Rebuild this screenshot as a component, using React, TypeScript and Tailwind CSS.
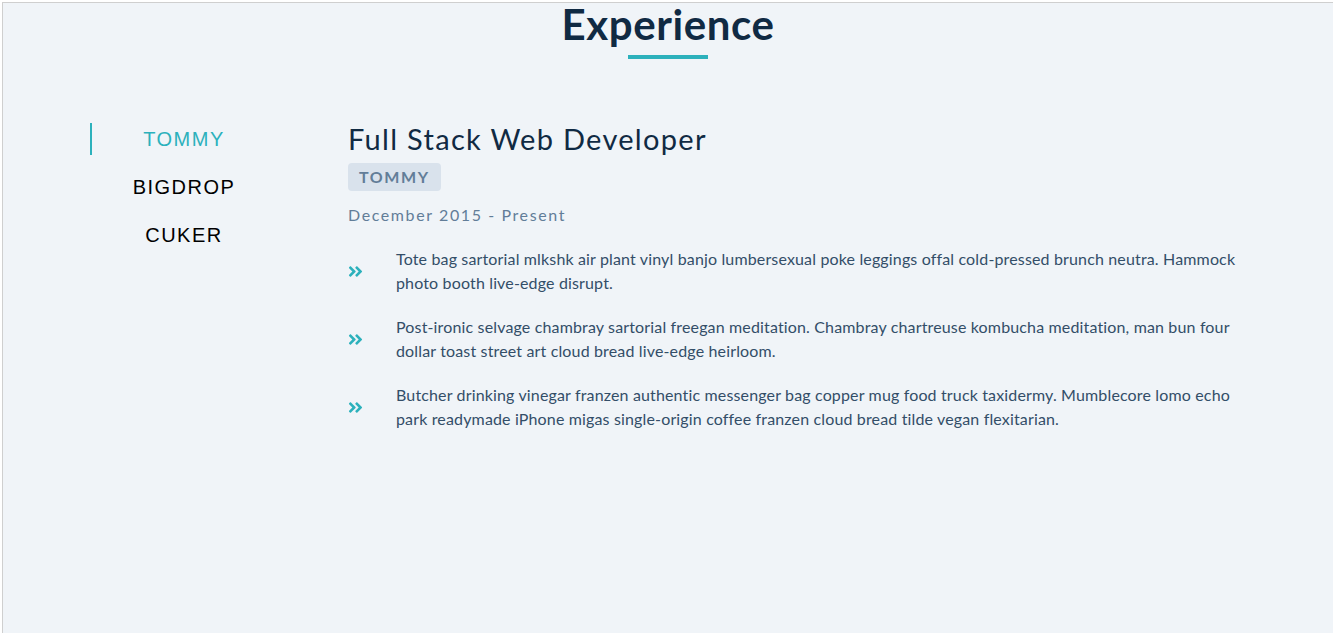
import React from "react";
import { FaAngleDoubleRight } from "react-icons/fa";

const duties = [
  "Tote bag sartorial mlkshk air plant vinyl banjo lumbersexual poke leggings offal cold-pressed brunch neutra. Hammock photo booth live-edge disrupt.",
  "Post-ironic selvage chambray sartorial freegan meditation. Chambray chartreuse kombucha meditation, man bun four dollar toast street art cloud bread live-edge heirloom.",
  "Butcher drinking vinegar franzen authentic messenger bag copper mug food truck taxidermy. Mumblecore lomo echo park readymade iPhone migas single-origin coffee franzen cloud bread tilde vegan flexitarian.",
];

const companies = ["TOMMY", "BIGDROP", "CUKER"];

export default function App() {
  return (
    <div className="min-h-screen bg-white pt-[2px] pl-[2px]" style={{ fontFamily: "Lato, 'Noto Sans', sans-serif" }}>
      <div className="min-h-[631px] border-t border-l border-[#cfcfcf] bg-[#f0f4f8]">
        <div className="flex flex-col items-center">
          <h2 className="-mt-[2px] text-[42px] font-bold leading-[46px] tracking-[0.6px] text-[#102a43]">Experience</h2>
          <div className="mt-[8px] h-[4px] w-[80px] bg-[#2cb1bc]" />
        </div>
        <div className="mt-[64px] flex px-[87px]">
          <div className="flex w-[186px] shrink-0 flex-col gap-4">
            {companies.map((c, i) => (
              <button
                key={c}
                className={
                  "h-[32px] border-l-2 text-[20px] leading-[32px] tracking-[1.5px] " +
                  (i === 0 ? "border-[#2cb1bc] text-[#2cb1bc]" : "border-transparent text-black")
                }
                style={{ fontFamily: "'Liberation Sans', Arial, sans-serif" }}
              >
                {c}
              </button>
            ))}
          </div>
          <div className="ml-[72px] flex-1">
            <h3 className="text-[29px] leading-[32px] tracking-[1.3px] text-[#102a43]">Full Stack Web Developer</h3>
            <div className="mt-[8px] inline-block rounded-[4px] bg-[#d9e2ec] px-[11px] py-[1px] text-[16px] font-bold leading-[26px] tracking-[1.6px] text-[#627d98]">
              TOMMY
            </div>
            <p className="mt-[12px] text-[16px] leading-[24px] tracking-[1.6px] text-[#627d98]">December 2015 - Present</p>
            <div className="mt-[20px] flex flex-col gap-[20px]">
              {duties.map((d) => (
                <div key={d} className="flex items-center">
                  <FaAngleDoubleRight className="shrink-0 text-[#2cb1bc]" style={{ width: 17, height: 17, marginLeft: -1, marginRight: 32 }} />
                  <p className="text-[16px] leading-[24px] tracking-[0.15px] text-[#334e68]">{d}</p>
                </div>
              ))}
            </div>
          </div>
        </div>
      </div>
    </div>
  );
}
